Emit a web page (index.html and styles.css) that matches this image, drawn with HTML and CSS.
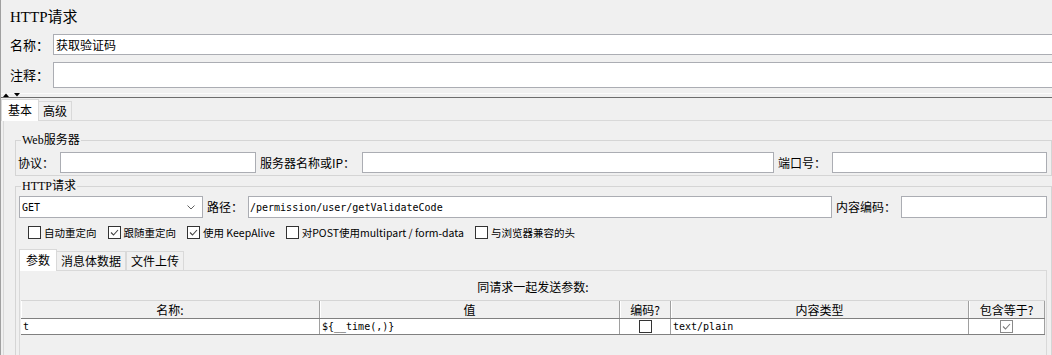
FILE: index.html
```html
<!DOCTYPE html>
<html lang="zh-CN">
<head>
    <meta charset="UTF-8">
    <title>HTTP请求</title>
    <link rel="stylesheet" href="styles.css">
</head>
<body>
<div class="window">
    <div class="head">
        <div class="title">HTTP请求</div>
        <div class="head-row">
            <label class="head-label">名称：</label>
            <input type="text" class="text-box head-input" value="获取验证码">
        </div>
        <div class="head-row head-row--tall">
            <label class="head-label">注释：</label>
            <input type="text" class="text-box head-input">
        </div>
    </div>

    <div class="splitter">
        <svg class="splitter__arrows" width="20" height="4" viewBox="0 0 20 4">
            <path d="M1 4 L4 0.5 L7 4 Z" fill="#000"/>
            <path d="M12 0 L18 0 L15 3.5 Z" fill="#000"/>
        </svg>
    </div>

    <div class="tabs">
        <div class="tab tab--active">基本</div>
        <div class="tab">高级</div>
    </div>

    <div class="tab-panel">
        <fieldset class="group">
            <legend class="group__title">Web服务器</legend>
            <div class="form-row">
                <label class="lbl lbl--proto">协议：</label>
                <input type="text" class="text-box w-proto">
                <label class="lbl lbl--host">服务器名称或IP：</label>
                <input type="text" class="text-box w-host">
                <label class="lbl lbl--port">端口号：</label>
                <input type="text" class="text-box w-fill">
            </div>
        </fieldset>

        <fieldset class="group group--request">
            <legend class="group__title">HTTP请求</legend>
            <div class="form-row form-row--request">
                <div class="select">
                    <select class="select__field mono">
                        <option>GET</option>
                    </select>
                    <svg class="select__arrow" width="8" height="5" viewBox="0 0 8 5">
                        <path d="M0.5 0.5 L4 4 L7.5 0.5" fill="none" stroke="#606060" stroke-width="1"/>
                    </svg>
                </div>
                <label class="lbl lbl--path">路径：</label>
                <input type="text" class="text-box w-path mono" value="/permission/user/getValidateCode">
                <label class="lbl lbl--enc">内容编码：</label>
                <input type="text" class="text-box w-fill">
            </div>

            <div class="options">
                <label class="option"><span class="check"></span>自动重定向</label>
                <label class="option"><span class="check"><svg width="11" height="11" viewBox="0 0 11 11"><path d="M2 5.5 L4.5 8 L9 3" fill="none" stroke="#444" stroke-width="1.1"/></svg></span>跟随重定向</label>
                <label class="option"><span class="check"><svg width="11" height="11" viewBox="0 0 11 11"><path d="M2 5.5 L4.5 8 L9 3" fill="none" stroke="#444" stroke-width="1.1"/></svg></span>使用 KeepAlive</label>
                <label class="option"><span class="check"></span>对POST使用multipart / form-data</label>
                <label class="option"><span class="check"></span>与浏览器兼容的头</label>
            </div>

            <div class="tabs tabs--sub">
                <div class="tab tab--active">参数</div>
                <div class="tab">消息体数据</div>
                <div class="tab">文件上传</div>
            </div>

            <div class="subpanel">
                <div class="params__caption">同请求一起发送参数:</div>
                <div class="params">
                    <div class="params__row params__row--head">
                        <div class="params__cell">名称:</div>
                        <div class="params__cell">值</div>
                        <div class="params__cell">编码?</div>
                        <div class="params__cell">内容类型</div>
                        <div class="params__cell">包含等于?</div>
                    </div>
                    <div class="params__row params__row--body">
                        <div class="params__cell">t</div>
                        <div class="params__cell">${__time(,)}</div>
                        <div class="params__cell params__cell--center"><span class="check"></span></div>
                        <div class="params__cell">text/plain</div>
                        <div class="params__cell params__cell--center"><span class="check check--dim"><svg width="11" height="11" viewBox="0 0 11 11"><path d="M2 5.5 L4.5 8 L9 3" fill="none" stroke="#7a7a7a" stroke-width="1.1"/></svg></span></div>
                    </div>
                </div>
            </div>
        </fieldset>
    </div>
</div>
</body>
</html>
```

FILE: styles.css
```css
html, body {
    margin: 0;
    padding: 0;
    background-color: #f0f0f0;
}

body {
    font-family: "Noto Sans CJK SC", sans-serif;
    font-size: 12px;
    color: #000;
}

.window {
    height: 355px;
    overflow: hidden;
    border-left: 1px solid #a0a0a0;
}

.mono {
    font-family: "DejaVu Sans Mono", monospace;
    font-size: 10px;
}

/* top part: title, name, comment */
.head {
    padding-left: 9px;
}

.title {
    font-family: "Liberation Serif", "Noto Sans CJK SC", serif;
    font-size: 15px;
    line-height: 20px;
    padding-top: 7px;
}

.head-row {
    display: flex;
    align-items: center;
    height: 21px;
    margin-top: 7px;
}

.head-row--tall {
    height: 26px;
}

.head-label {
    flex: none;
    width: 43px;
    font-size: 13px;
    line-height: 16px;
}

.text-box {
    box-sizing: border-box;
    height: 100%;
    margin: 0;
    padding: 0 2px;
    border: 1px solid #abadb3;
    background: #fff;
    font-family: "Noto Sans CJK SC", sans-serif;
    font-size: 12px;
    color: #000;
    outline: none;
    min-width: 0;
}

.text-box.mono {
    font-family: "DejaVu Sans Mono", monospace;
    font-size: 10px;
    padding-left: 1px;
}

.head-input {
    flex: 1;
    margin-right: -12px;
}

.splitter {
    height: 4px;
    padding-top: 5px;
    border-bottom: 1px solid #6d6d6d;
    background: linear-gradient(to bottom, transparent 5px, #fbfbfb 5px, #fbfbfb 6px, transparent 6px);
}

.splitter__arrows {
    display: block;
    margin-left: 1px;
}

/* tabs */
.tabs {
    display: flex;
    align-items: flex-end;
    height: 22px;
}

.tab {
    box-sizing: border-box;
    height: 19px;
    padding: 0 4px;
    border: 1px solid #d9d9d9;
    border-bottom: none;
    font-size: 12px;
    line-height: 18px;
    white-space: nowrap;
}

.tab--active {
    position: relative;
    height: 22px;
    margin-bottom: -1px;
    padding: 0 6px;
    background: #fff;
    line-height: 20px;
}

.tab--active + .tab {
    border-left: none;
}

.tab-panel {
    margin-left: 2px;
    height: 240px;
    border-top: 1px solid #d9d9d9;
    border-left: 1px solid #d9d9d9;
}

/* group boxes */
.group {
    margin: 12px 0 0 11px;
    padding: 5px 4px 2px 2px;
    border: 1px solid #d5d5d5;
    min-width: 0;
}

.group__title {
    margin-left: 3px;
    padding: 0 1px;
    font-family: "Liberation Serif", "Noto Sans CJK SC", serif;
    font-size: 12px;
    line-height: 14px;
}

.group--request {
    margin-top: 3px;
    padding-top: 3px;
    padding-bottom: 0;
    border-bottom: none;
}

.form-row {
    display: flex;
    align-items: center;
    gap: 4px;
    height: 21px;
}

.form-row--request {
    height: 22px;
    padding-left: 1px;
}

.lbl {
    flex: none;
    font-size: 12px;
    line-height: 14px;
    white-space: nowrap;
}

.lbl--proto { width: 38px; }
.lbl--host { width: 98px; }
.lbl--port { width: 50px; }
.lbl--path { width: 37px; }
.lbl--enc { width: 61px; }

.w-proto { width: 196px; flex: none; }
.w-host { width: 412px; flex: none; }
.w-path { width: 584px; flex: none; }
.w-fill { flex: 1; }

.select {
    box-sizing: border-box;
    flex: none;
    display: flex;
    align-items: center;
    width: 184px;
    height: 100%;
    padding: 0 7px 0 2px;
    border: 1px solid #abadb3;
    background: #fff;
}

.select__field {
    flex: 1;
    min-width: 0;
    margin: 0;
    padding: 0;
    border: none;
    background: transparent;
    appearance: none;
    outline: none;
    color: #000;
}

.select__arrow {
    display: block;
    flex: none;
}

/* check boxes */
.options {
    display: flex;
    gap: 11px;
    height: 13px;
    margin: 8px 0 0 10px;
}

.option {
    display: flex;
    align-items: center;
    gap: 3px;
    font-size: 10.5px;
    line-height: 13px;
    white-space: nowrap;
}

.check {
    box-sizing: border-box;
    flex: none;
    display: flex;
    align-items: center;
    justify-content: center;
    width: 13px;
    height: 13px;
    border: 1px solid #333;
    background: #fff;
}

.check svg {
    display: block;
}

.check--dim {
    border-color: #8a8a8a;
}

/* parameters tab */
.tabs--sub {
    margin: 9px 0 0 1px;
}

.subpanel {
    height: 120px;
    margin-left: 1px;
    padding: 8px 1px 0;
    border: 1px solid #d9d9d9;
    border-bottom: none;
}

.params__caption {
    text-align: center;
    font-size: 12px;
    line-height: 16px;
}

.params {
    margin-top: 5px;
}

.params__row {
    display: grid;
    grid-template-columns: 299px 300px 51px 298px 1fr;
    box-sizing: border-box;
}

.params__cell {
    box-sizing: border-box;
    overflow: hidden;
    white-space: nowrap;
    border-right: 1px solid #a0a0a0;
}

.params__row--head {
    height: 19px;
    border-top: 1px solid #d5d5d5;
    border-bottom: 1px solid #808080;
    background: #f0f0f0;
}

.params__row--head .params__cell {
    text-align: center;
    font-size: 12px;
    line-height: 17px;
    box-shadow: inset 1px 0 #fff;
}

.params__row--body {
    height: 16px;
    border-bottom: 1px solid #808080;
    background: #fff;
}

.params__row--body .params__cell {
    padding-left: 2px;
    font-family: "DejaVu Sans Mono", monospace;
    font-size: 10px;
    line-height: 15px;
}

.params__row--body .params__cell--center {
    display: flex;
    align-items: center;
    justify-content: center;
    padding-left: 0;
}
```
